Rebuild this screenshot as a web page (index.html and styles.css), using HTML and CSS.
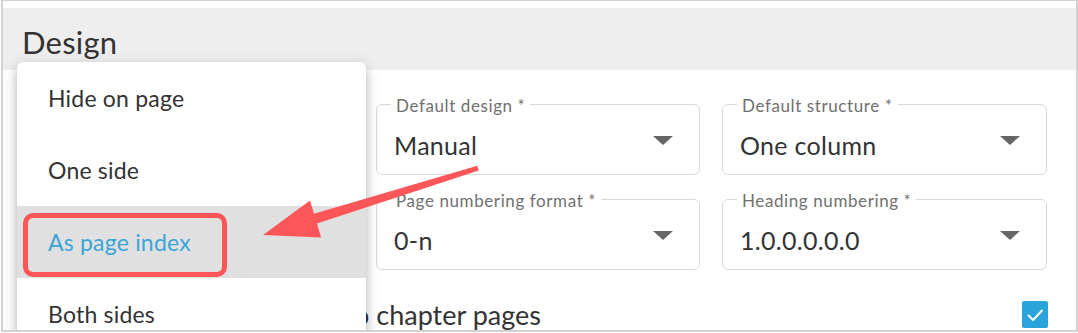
FILE: index.html
```html
<!DOCTYPE html>
<html lang="en">
<head>
<meta charset="utf-8">
<title>Design</title>
<link rel="stylesheet" href="styles.css">
</head>
<body>
<div class="frame">
  <div class="inner">
    <div class="header"><h2 class="title">Design</h2></div>

    <div class="content">
      <div class="grid">
        <fieldset class="field">
          <legend class="label">Default design *</legend>
          <div class="control"><span class="value">Manual</span><span class="caret"></span></div>
        </fieldset>
        <fieldset class="field">
          <legend class="label">Default structure *</legend>
          <div class="control"><span class="value">One column</span><span class="caret"></span></div>
        </fieldset>
        <fieldset class="field">
          <legend class="label">Page numbering format *</legend>
          <div class="control"><span class="value">0-n</span><span class="caret"></span></div>
        </fieldset>
        <fieldset class="field">
          <legend class="label">Heading numbering *</legend>
          <div class="control"><span class="value">1.0.0.0.0.0</span><span class="caret"></span></div>
        </fieldset>
      </div>
    </div>

    <div class="check-row">
      <span class="check-label">Apply heading numbering to chapter pages</span>
      <span class="checkbox">
        <svg width="26" height="27" viewBox="0 0 26 27"><path d="M6.5 14.5 L11 19 L20 9.5" fill="none" stroke="#fff" stroke-width="2" stroke-linecap="round" stroke-linejoin="round"/></svg>
      </span>
    </div>

    <ul class="menu">
      <li class="item">Hide on page</li>
      <li class="item">One side</li>
      <li class="item selected">As page index<span class="mark"></span></li>
      <li class="item">Both sides</li>
    </ul>

    <svg class="arrow" width="1072" height="329" viewBox="3 1 1072 329">
      <polygon points="477.3,165.8 478.7,170.5 317,223.4 321,237.5 263,235 310,200.5 314,213.8" fill="#fc5659"/>
    </svg>
  </div>
</div>
</body>
</html>
```

FILE: styles.css
```css
* { box-sizing: border-box; }
html, body { margin: 0; padding: 0; background: #fff; }
body { font-family: Lato, "Open Sans", sans-serif; color: #333; }

.frame {
  width: 1077px;
  height: 332px;
  margin-left: 1px;
  border: 2px solid #d2d2d2;
  border-top-width: 1px;
}
.inner {
  position: relative;
  width: 100%;
  height: 100%;
  overflow: hidden;
}

.header {
  margin-top: 7px;
  height: 62px;
  background: #eeeeee;
  padding: 19px 0 0 19px;
}
.title {
  margin: 0;
  font-weight: 400;
  font-size: 31px;
  line-height: 31px;
  letter-spacing: 0.2px;
  color: #333;
}

.content {
  padding: 24px 28px 0 373px;
}
.grid {
  display: grid;
  grid-template-columns: 324px 325px;
  column-gap: 22px;
  row-gap: 14px;
}
.field {
  margin: 0;
  min-width: 0;
  border: 1px solid #d9d9d9;
  border-radius: 6px;
  padding: 17px 26px 14px 17px;
}
.label {
  padding: 4px 5px 0;
  margin-left: -3px;
  font-size: 17px;
  line-height: 16px;
  letter-spacing: 0.6px;
  color: #707070;
}
.control {
  display: flex;
  align-items: center;
  justify-content: space-between;
}
.value {
  font-size: 25px;
  line-height: 29px;
  letter-spacing: 0.3px;
  color: #333;
}
.caret {
  width: 0;
  height: 0;
  border-left: 10px solid transparent;
  border-right: 10px solid transparent;
  border-top: 9px solid #666;
  margin-bottom: 10px;
}

.check-row {
  display: flex;
  align-items: center;
  justify-content: space-between;
  margin-top: 30px;
  padding: 0 28px 0 32px;
}
.check-label {
  font-size: 27px;
  line-height: 29px;
  color: #333;
}
.checkbox {
  display: flex;
  width: 26px;
  height: 27px;
  border-radius: 2px;
  background: #2aa4db;
}

.menu {
  position: absolute;
  left: 14px;
  top: 61px;
  width: 349px;
  margin: 0;
  padding: 0;
  list-style: none;
  background: #fff;
  border-radius: 6px;
  box-shadow: 0 5px 5px -3px rgba(0,0,0,.2), 0 8px 10px 1px rgba(0,0,0,.14), 0 3px 14px 2px rgba(0,0,0,.12);
}
.item {
  position: relative;
  height: 72px;
  display: flex;
  align-items: center;
  padding-left: 31px;
  font-size: 23px;
  letter-spacing: 0.2px;
  color: #333;
}
.item.selected {
  background: #e0e0e0;
  color: #3aa5d9;
}
.mark {
  position: absolute;
  left: 6px;
  top: 7px;
  width: 204px;
  height: 64px;
  border: 5px solid #fc5659;
  border-radius: 10px;
}

.arrow {
  position: absolute;
  left: 0;
  top: 0;
  pointer-events: none;
}
```
